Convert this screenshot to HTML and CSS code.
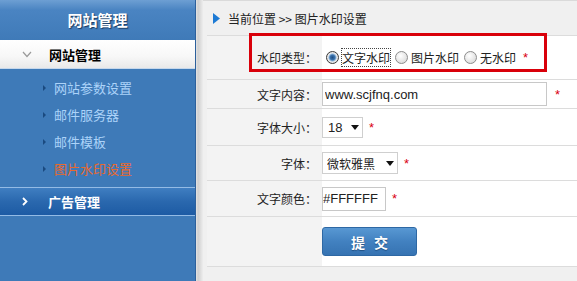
FILE: index.html
```html
<!DOCTYPE html>
<html lang="zh-CN">
<head>
    <meta charset="UTF-8">
    <title>图片水印设置</title>
    <link rel="stylesheet" href="styles.css">
</head>
<body>
    <div class="page">
        <aside class="sidebar">
            <div class="side-title">网站管理</div>

            <div class="menu-head open">
                <svg width="10" height="7" viewBox="0 0 10 7"><polyline points="1,1 5,5.5 9,1" fill="none" stroke="#9a9a9a" stroke-width="1.2"/></svg>
                网站管理
            </div>
            <ul class="submenu">
                <li>网站参数设置</li>
                <li>邮件服务器</li>
                <li>邮件模板</li>
                <li class="current">图片水印设置</li>
            </ul>

            <div class="menu-head closed">
                <svg width="6" height="9" viewBox="0 0 6 9"><polyline points="1,1 4.5,4.5 1,8" fill="none" stroke="#fff" stroke-width="1.8"/></svg>
                广告管理
            </div>
        </aside>

        <div class="split"></div>

        <main class="main">
            <div class="crumb">
                <svg class="crumb-arrow" width="7" height="11" viewBox="0 0 7 11"><polygon points="0,0 7,5.5 0,11" fill="#1d7ad4"/></svg>
                <span>当前位置 &gt;&gt; 图片水印设置</span>
            </div>

            <div class="row r1">
                <div class="label">水印类型：</div>
                <div class="field">
                    <div class="choice">
                        <label class="opt"><span class="dot on"></span><span class="focus">文字水印</span></label>
                        <label class="opt"><span class="dot"></span>图片水印</label>
                        <label class="opt"><span class="dot"></span>无水印</label>
                        <span class="req">*</span>
                    </div>
                </div>
            </div>

            <div class="row r2">
                <div class="label">文字内容：</div>
                <div class="field">
                    <input class="txt" type="text" value="www.scjfnq.com">
                    <span class="req wide">*</span>
                </div>
            </div>

            <div class="row r3">
                <div class="label">字体大小：</div>
                <div class="field">
                    <span class="sel">
                        <select class="size"><option>18</option></select>
                    </span>
                    <span class="req">*</span>
                </div>
            </div>

            <div class="row r4">
                <div class="label">字体：</div>
                <div class="field">
                    <span class="sel">
                        <select class="face"><option>微软雅黑</option></select>
                    </span>
                    <span class="req">*</span>
                </div>
            </div>

            <div class="row r5">
                <div class="label">文字颜色：</div>
                <div class="field">
                    <input class="txt color" type="text" value="#FFFFFF">
                    <span class="req">*</span>
                </div>
            </div>

            <div class="row r6">
                <div class="label"></div>
                <div class="field">
                    <button class="btn">提 交</button>
                </div>
            </div>

            <!-- 红色标注框 -->
            <div class="mark"></div>
        </main>
    </div>
</body>
</html>
```

FILE: styles.css
```css
* {
    margin: 0;
    padding: 0;
    box-sizing: border-box;
}

body {
    font-family: "Noto Sans CJK SC", "Liberation Sans", sans-serif;
    font-size: 12px;
    color: #222;
    background: #f0f0f0;
    height: 281px;
    overflow: hidden;
}

.page {
    display: flex;
    height: 281px;
}

/* 左侧菜单 */
.sidebar {
    width: 196px;
    flex-shrink: 0;
    background: #3e7ab8;
    border-right: 1px solid #2c609c;
}

.side-title {
    height: 40px;
    line-height: 40px;
    text-align: center;
    color: #fff;
    font-size: 15px;
    font-weight: bold;
    background: linear-gradient(#6d9fd3, #4a84c2 25%, #3f7ab8);
    text-shadow: 1px 1px 1px #1b3b62;
}

.menu-head {
    height: 29px;
    display: flex;
    align-items: center;
    font-size: 13px;
    font-weight: bold;
}

.menu-head.open {
    color: #000;
    background: linear-gradient(#fff, #f7f7f7 60%, #e9e9e9);
    border-bottom: 1px solid #c6d8ec;
}

.menu-head.open svg {
    margin-left: 22px;
    margin-right: 17px;
}

.menu-head.closed {
    color: #fff;
    background: linear-gradient(#3f7ec1, #2a68ae 50%, #1d5ba4);
    border-top: 1px solid #93bbe5;
    border-bottom: 1px solid #93bbe5;
}

.menu-head.closed svg {
    margin-left: 22px;
    margin-right: 20px;
}

.submenu {
    list-style: none;
    padding: 5px 0;
}

.submenu li {
    height: 27px;
    display: flex;
    align-items: center;
    padding-left: 43px;
    color: #acd3f9;
    font-size: 13px;
}

.submenu li::before {
    content: "";
    border-left: 3px solid #1a4a80;
    border-top: 3px solid transparent;
    border-bottom: 3px solid transparent;
    margin-right: 8px;
}

.submenu li.current {
    color: #e8692e;
}

.split {
    width: 7px;
    flex-shrink: 0;
    background: linear-gradient(to right, #e4e4e4, #cfcfcf 30%, #ededed);
}

/* 右侧内容 */
.main {
    flex: 1;
    position: relative;
    padding-left: 4px;
    border-top: 1px solid #dadada;
}

.crumb {
    height: 35px;
    display: flex;
    align-items: center;
    padding-left: 6px;
    border-bottom: 1px solid #dcdcdc;
}

.crumb-arrow {
    margin-right: 8px;
}

.row {
    display: flex;
    border-bottom: 1px solid #dcdcdc;
}

.r1 { height: 44px; }
.r2 { height: 29px; }
.r3 { height: 37px; }
.r4 { height: 35px; }
.r5 { height: 36px; }
.r6 { height: 50px; }

.label {
    width: 115px;
    flex-shrink: 0;
    display: flex;
    align-items: center;
    justify-content: flex-end;
    padding-right: 5px;
    background: #f3f3f3;
}

.field {
    flex: 1;
    display: flex;
    align-items: center;
    background: #fff;
}

.choice {
    display: flex;
    align-items: center;
    margin-left: 4px;
}

.opt {
    display: flex;
    align-items: center;
    margin-right: 5px;
}

.dot {
    width: 13px;
    height: 13px;
    border-radius: 50%;
    border: 1px solid #8c8c8c;
    background: radial-gradient(circle at 40% 35%, #fff, #d2d2d2);
    margin-right: 3px;
}

.dot.on {
    border-color: #3a3a3a;
    background: radial-gradient(circle, #1e4e86 0, #3d74ad 2.5px, #8fb6dc 3.5px, #ececec 4.5px, #c9c9c9);
}

.focus {
    outline: 1px dotted #444;
}

.req {
    color: #d9000f;
    font-family: "Liberation Sans", sans-serif;
    font-size: 13px;
    margin-left: 6px;
}

.choice .req {
    margin-left: 2px;
}

.req.wide {
    margin-left: 8px;
}

.txt {
    width: 225px;
    height: 24px;
    border: 1px solid #c8c8c8;
    padding-left: 2px;
    font-family: "Liberation Sans", sans-serif;
    font-size: 13px;
    color: #222;
}

.txt.color {
    width: 64px;
    padding-left: 0;
}

.sel {
    position: relative;
    display: inline-block;
}

.sel select {
    appearance: none;
    -webkit-appearance: none;
    border: 1px solid #cfcfcf;
    background: #fff;
    font-family: "Liberation Sans", "Noto Sans CJK SC", sans-serif;
    color: #222;
    display: block;
}

.sel::after {
    content: "";
    position: absolute;
    right: 4px;
    top: 50%;
    margin-top: -2px;
    border-left: 4px solid transparent;
    border-right: 4px solid transparent;
    border-top: 5px solid #111;
    pointer-events: none;
}

select.size {
    width: 41px;
    height: 21px;
    padding-left: 5px;
    font-size: 13px;
}

select.face {
    width: 76px;
    height: 22px;
    padding-left: 4px;
    font-size: 12px;
    font-family: "Noto Sans CJK SC", sans-serif;
}

.btn {
    width: 95px;
    height: 29px;
    border: 1px solid #2e68a4;
    border-radius: 3px;
    background: linear-gradient(#5898d3, #4281c0 50%, #3673b2);
    color: #fff;
    font-family: "Noto Sans CJK SC", sans-serif;
    font-size: 14px;
    font-weight: bold;
    letter-spacing: 3px;
    padding-left: 3px;
    text-shadow: 0 1px 1px #1f4f82;
}

.mark {
    position: absolute;
    left: 46px;
    top: 32px;
    width: 298px;
    height: 39px;
    border: 3px solid #d9000a;
}
```
